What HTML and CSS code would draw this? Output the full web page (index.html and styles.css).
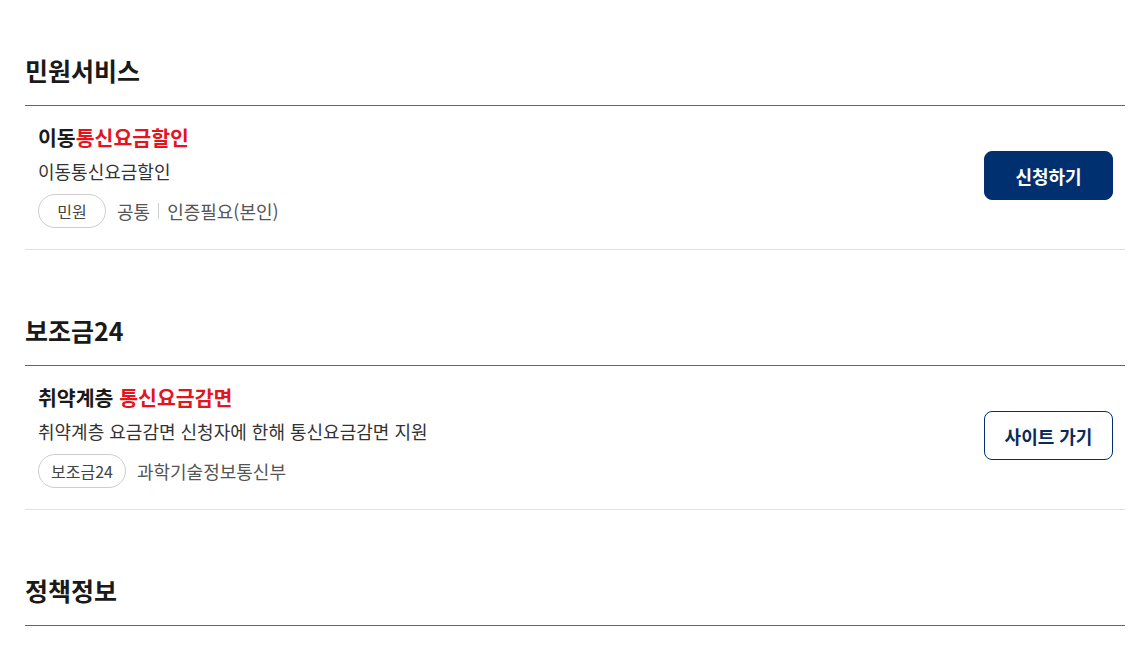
FILE: index.html
```html
<!DOCTYPE html>
<html lang="ko">
<head>
<meta charset="utf-8">
<link rel="stylesheet" href="styles.css">
</head>
<body>
<main class="page">
  <section class="group">
    <h2 class="group-title">민원서비스</h2>
    <ul class="list">
      <li class="item">
        <div class="info">
          <p class="item-title">이동<em>통신요금할인</em></p>
          <p class="item-desc">이동통신요금할인</p>
          <div class="meta">
            <span class="pill">민원</span>
            <span class="meta-text">공통</span>
            <span class="sep"></span>
            <span class="meta-text">인증필요(본인)</span>
          </div>
        </div>
        <a class="btn btn-primary" href="#">신청하기</a>
      </li>
    </ul>
  </section>
  <section class="group">
    <h2 class="group-title">보조금24</h2>
    <ul class="list">
      <li class="item">
        <div class="info">
          <p class="item-title">취약계층 <em>통신요금감면</em></p>
          <p class="item-desc">취약계층 요금감면 신청자에 한해 통신요금감면 지원</p>
          <div class="meta">
            <span class="pill">보조금24</span>
            <span class="meta-text">과학기술정보통신부</span>
          </div>
        </div>
        <a class="btn btn-outline" href="#">사이트 가기</a>
      </li>
    </ul>
  </section>
  <section class="group">
    <h2 class="group-title">정책정보</h2>
  </section>
</main>
</body>
</html>
```
FILE: styles.css
```css
* { box-sizing: border-box; }
html, body { margin: 0; padding: 0; background: #fff; }
body {
  font-family: "Noto Sans CJK KR", "Noto Sans", sans-serif;
  color: #1e1e1e;
}
.page {
  padding: 53px 11px 0 25px;
}
.group + .group { margin-top: 63px; }
.group-title {
  margin: 0;
  font-size: 25px;
  line-height: 34px;
  font-weight: 700;
  color: #1a1a1a;
  padding-bottom: 18px;
  border-bottom: 1px solid #666;
}
.list { list-style: none; margin: 0; padding: 0; }
.item {
  display: flex;
  align-items: center;
  justify-content: space-between;
  padding: 17px 12px 21px 13px;
  border-bottom: 1px solid #e1e1e1;
}
.info { display: flex; flex-direction: column; }
.item-title {
  margin: 0;
  font-size: 20.5px;
  line-height: 28px;
  font-weight: 700;
  color: #1a1a1a;
}
.item-title em { font-style: normal; color: #e4151f; }
.item-desc {
  margin: 7px 0 0;
  font-size: 18px;
  line-height: 26px;
  color: #333;
}
.meta {
  display: flex;
  align-items: center;
  margin-top: 10px;
  gap: 11px;
}
.pill {
  display: inline-flex;
  align-items: center;
  justify-content: center;
  height: 34px;
  padding: 0 12px;
  min-width: 68px;
  border: 1px solid #cdcdcd;
  border-radius: 17px;
  font-size: 16px;
  color: #444;
}
.meta-text {
  font-size: 18px;
  line-height: 26px;
  color: #555;
}
.sep {
  width: 1px;
  height: 16px;
  background: #ccc;
  margin: 0 -3px;
}
.btn {
  display: inline-flex;
  align-items: center;
  justify-content: center;
  width: 129px;
  height: 49px;
  border-radius: 8px;
  font-size: 18px;
  font-weight: 700;
  text-decoration: none;
}
.btn-primary {
  background: #003070;
  color: #fff;
  border: 1px solid #003070;
}
.btn-outline {
  background: #fff;
  color: #0a2a5e;
  border: 1px solid #003070;
}
```
